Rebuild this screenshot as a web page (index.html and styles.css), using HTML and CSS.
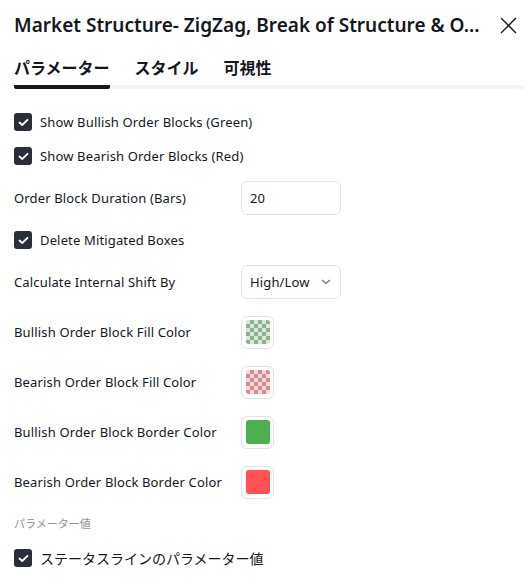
FILE: index.html
```html
<!DOCTYPE html>
<html lang="ja">
<head>
    <meta charset="UTF-8">
    <meta name="viewport" content="width=device-width, initial-scale=1.0">
    <title>Market Structure Settings</title>
    <link rel="stylesheet" href="styles.css">
</head>
<body>
    <div class="dialog">
        <!-- Title bar -->
        <header class="dialog-head">
            <h1 class="dialog-title">Market Structure- ZigZag, Break of Structure &amp; O...</h1>
            <button class="close-btn" aria-label="Close">
                <svg width="17" height="17" viewBox="0 0 17 17"><path d="M1 1L16 16M16 1L1 16" stroke="#131722" stroke-width="1.4" fill="none"/></svg>
            </button>
        </header>

        <!-- Tabs -->
        <nav class="tabs">
            <a class="tab active">パラメーター</a>
            <a class="tab">スタイル</a>
            <a class="tab">可視性</a>
        </nav>

        <!-- Inputs -->
        <div class="settings">
            <label class="check-row">
                <span class="checkbox"><svg width="11" height="9" viewBox="0 0 11 9"><path d="M1.5 4.5L4.2 7L9.5 1.8" stroke="#fff" stroke-width="1.8" fill="none" stroke-linecap="round" stroke-linejoin="round"/></svg></span>
                Show Bullish Order Blocks (Green)
            </label>
            <label class="check-row">
                <span class="checkbox"><svg width="11" height="9" viewBox="0 0 11 9"><path d="M1.5 4.5L4.2 7L9.5 1.8" stroke="#fff" stroke-width="1.8" fill="none" stroke-linecap="round" stroke-linejoin="round"/></svg></span>
                Show Bearish Order Blocks (Red)
            </label>
            <div class="field-row">
                <span class="field-label">Order Block Duration (Bars)</span>
                <div class="input-box">20</div>
            </div>
            <label class="check-row">
                <span class="checkbox"><svg width="11" height="9" viewBox="0 0 11 9"><path d="M1.5 4.5L4.2 7L9.5 1.8" stroke="#fff" stroke-width="1.8" fill="none" stroke-linecap="round" stroke-linejoin="round"/></svg></span>
                Delete Mitigated Boxes
            </label>
            <div class="field-row">
                <span class="field-label">Calculate Internal Shift By</span>
                <div class="input-box select-box">
                    High/Low
                    <svg width="10" height="6" viewBox="0 0 10 6"><path d="M1 1L5 4.5L9 1" stroke="#6a6d78" stroke-width="1.2" fill="none"/></svg>
                </div>
            </div>
            <div class="field-row swatch-row">
                <span class="field-label">Bullish Order Block Fill Color</span>
                <div class="swatch"><span class="swatch-color checker green-checker"></span></div>
            </div>
            <div class="field-row swatch-row">
                <span class="field-label">Bearish Order Block Fill Color</span>
                <div class="swatch"><span class="swatch-color checker red-checker"></span></div>
            </div>
            <div class="field-row swatch-row">
                <span class="field-label">Bullish Order Block Border Color</span>
                <div class="swatch"><span class="swatch-color solid-green"></span></div>
            </div>
            <div class="field-row swatch-row">
                <span class="field-label">Bearish Order Block Border Color</span>
                <div class="swatch"><span class="swatch-color solid-red"></span></div>
            </div>
        </div>

        <!-- Input values section -->
        <div class="section-title">パラメーター値</div>
        <label class="check-row jp-row">
            <span class="checkbox"><svg width="11" height="9" viewBox="0 0 11 9"><path d="M1.5 4.5L4.2 7L9.5 1.8" stroke="#fff" stroke-width="1.8" fill="none" stroke-linecap="round" stroke-linejoin="round"/></svg></span>
            ステータスラインのパラメーター値
        </label>
    </div>
</body>
</html>
```

FILE: styles.css
```css
body {
    margin: 0;
    padding: 0;
    background: #fff;
    color: #131722;
    font-family: "Noto Sans", "Noto Sans CJK JP", sans-serif;
    font-size: 13px;
}

.dialog {
    width: 530px;
    padding: 0 6px 0 14px;
    box-sizing: border-box;
}

/* Title bar */
.dialog-head {
    display: flex;
    align-items: center;
    justify-content: space-between;
    height: 50px;
}

.dialog-title {
    margin: 0;
    font-size: 19px;
    font-weight: 600;
    white-space: nowrap;
}

.close-btn {
    background: none;
    border: none;
    padding: 0;
    margin-right: 7px;
    width: 17px;
    height: 17px;
    cursor: pointer;
}

/* Tabs */
.tabs {
    display: flex;
    gap: 25px;
    border-bottom: 4px solid #f0f3fa;
    margin-top: 5px;
}

.tab {
    font-family: "Noto Sans CJK JP", sans-serif;
    font-size: 16px;
    font-weight: 700;
    padding-bottom: 6px;
    margin-bottom: -4px;
    border-bottom: 4px solid transparent;
    line-height: 24px;
}

.tab.active {
    border-bottom-color: #131722;
    border-radius: 2px;
}

/* Settings list */
.settings {
    display: flex;
    flex-direction: column;
    gap: 16px;
    padding-top: 24px;
    letter-spacing: 0.15px;
}

.check-row {
    display: flex;
    align-items: center;
    gap: 8px;
    height: 18px;
}

.checkbox {
    flex: none;
    width: 18px;
    height: 18px;
    border-radius: 3px;
    background: #2a2e39;
    display: flex;
    align-items: center;
    justify-content: center;
}

.field-row {
    display: flex;
    align-items: center;
    height: 34px;
}

.field-label {
    width: 227px;
}

.input-box {
    width: 100px;
    height: 34px;
    box-sizing: border-box;
    border: 1px solid #e0e3eb;
    border-radius: 6px;
    padding: 0 8px;
    display: flex;
    align-items: center;
}

.select-box {
    justify-content: space-between;
    padding-right: 9px;
}

.swatch {
    width: 33px;
    height: 33px;
    box-sizing: border-box;
    border: 1px solid #e0e3eb;
    border-radius: 6px;
    display: flex;
    align-items: center;
    justify-content: center;
}

.swatch-color {
    width: 24px;
    height: 24px;
    border-radius: 3px;
}

.checker {
    background-size: 8px 8px;
    background-position: 0 0, 4px 4px;
}

.green-checker {
    background-color: #d1ecd2;
    background-image:
        linear-gradient(45deg, #91ae92 25%, transparent 25%, transparent 75%, #91ae92 75%),
        linear-gradient(45deg, #91ae92 25%, transparent 25%, transparent 75%, #91ae92 75%);
}

.red-checker {
    background-color: #ffd3d3;
    background-image:
        linear-gradient(45deg, #c29494 25%, transparent 25%, transparent 75%, #c29494 75%),
        linear-gradient(45deg, #c29494 25%, transparent 25%, transparent 75%, #c29494 75%);
}

.solid-green {
    background: #4caf50;
}

.solid-red {
    background: #ff5252;
}

/* Section */
.section-title {
    font-family: "Noto Sans CJK JP", sans-serif;
    font-size: 11px;
    color: #8e9099;
    margin-top: 16px;
    line-height: 16px;
}

.jp-row {
    margin-top: 18px;
    font-family: "Noto Sans CJK JP", sans-serif;
    font-size: 14px;
}
```
